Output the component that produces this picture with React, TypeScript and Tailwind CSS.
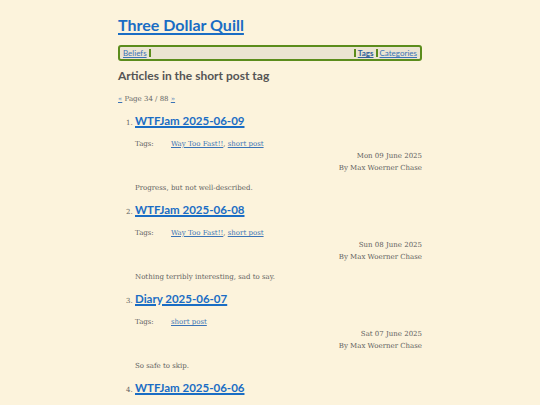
import React from 'react';

type Post = {
    title: string;
    tags: string[];
    date: string;
    summary: string;
};

const posts: Post[] = [
    { title: 'WTFJam 2025-06-09', tags: ['Way Too Fast!!', 'short post'], date: 'Mon 09 June 2025', summary: 'Progress, but not well-described.' },
    { title: 'WTFJam 2025-06-08', tags: ['Way Too Fast!!', 'short post'], date: 'Sun 08 June 2025', summary: 'Nothing terribly interesting, sad to say.' },
    { title: 'Diary 2025-06-07', tags: ['short post'], date: 'Sat 07 June 2025', summary: 'So safe to skip.' },
    { title: 'WTFJam 2025-06-06', tags: ['Way Too Fast!!', 'short post'], date: 'Fri 06 June 2025', summary: 'More of the same.' },
];

const heading = { fontFamily: 'Lato, "Noto Sans", sans-serif' };
const body = { fontFamily: '"DejaVu Serif", "Liberation Serif", serif' };

export default function App() {
    return (
        <div className="h-[405px] w-full overflow-hidden bg-[#fcf3dc] text-[#555]">
            <div className="mx-auto w-[304px] pt-[13px]">
                {/* Site title */}
                <h1 style={heading} className="text-[16px] font-bold leading-[24px]">
                    <a href="#" className="text-[#1a6dc4] underline decoration-2 underline-offset-2">Three Dollar Quill</a>
                </h1>

                {/* Nav bar */}
                <nav style={heading} className="mt-[8px] flex h-[16px] items-center rounded-[3px] border-2 border-[#5b8c1c] bg-[#ebe4d2] px-[1px] text-[8px] leading-none">
                    <a href="#" className="border-r-2 border-[#5b8c1c] px-[2px] text-[#3a73b6] underline">Beliefs</a>
                    <span className="flex-1" />
                    <a href="#" className="border-x-2 border-[#5b8c1c] px-[2px] font-bold text-[#2f5f99] underline">Tags</a>
                    <a href="#" className="px-[2px] text-[#3a73b6] underline">Categories</a>
                </nav>

                <h2 style={heading} className="mt-[7px] text-[12px] font-bold leading-[16px] text-[#555]">
                    Articles in the short post tag
                </h2>

                <p style={body} className="mt-[10px] text-[7px] leading-[10px] text-[#666]">
                    <a href="#" className="text-[#3a73b6] underline">«</a> Page 34 / 88 <a href="#" className="text-[#3a73b6] underline">»</a>
                </p>

                <ol className="mt-[9px] list-decimal pl-[17px]">
                    {posts.map((p) => (
                        <li key={p.title} style={body} className="text-[7px] text-[#5f5f5f]">
                            <h3 style={heading} className="text-[11.5px] font-bold leading-[16px]">
                                <a href="#" className="text-[#1a6dc4] underline decoration-[1.5px]">{p.title}</a>
                            </h3>
                            <div className="mt-[10px] flex text-[7px] leading-[11px]">
                                <span className="w-[36px]">Tags:</span>
                                <span>
                                    {p.tags.map((t, i) => (
                                        <React.Fragment key={t}>
                                            {i > 0 && ', '}
                                            <a href="#" className="text-[#3a73b6] underline">{t}</a>
                                        </React.Fragment>
                                    ))}
                                </span>
                            </div>
                            <div className="text-right text-[7px] leading-[12px]">{p.date}</div>
                            <div className="text-right text-[7px] leading-[12px]">By Max Woerner Chase</div>
                            <p className="mt-[8px] text-[7px] leading-[12px]">{p.summary}</p>
                            <div className="h-[8px]" />
                        </li>
                    ))}
                </ol>
            </div>
        </div>
    );
}
